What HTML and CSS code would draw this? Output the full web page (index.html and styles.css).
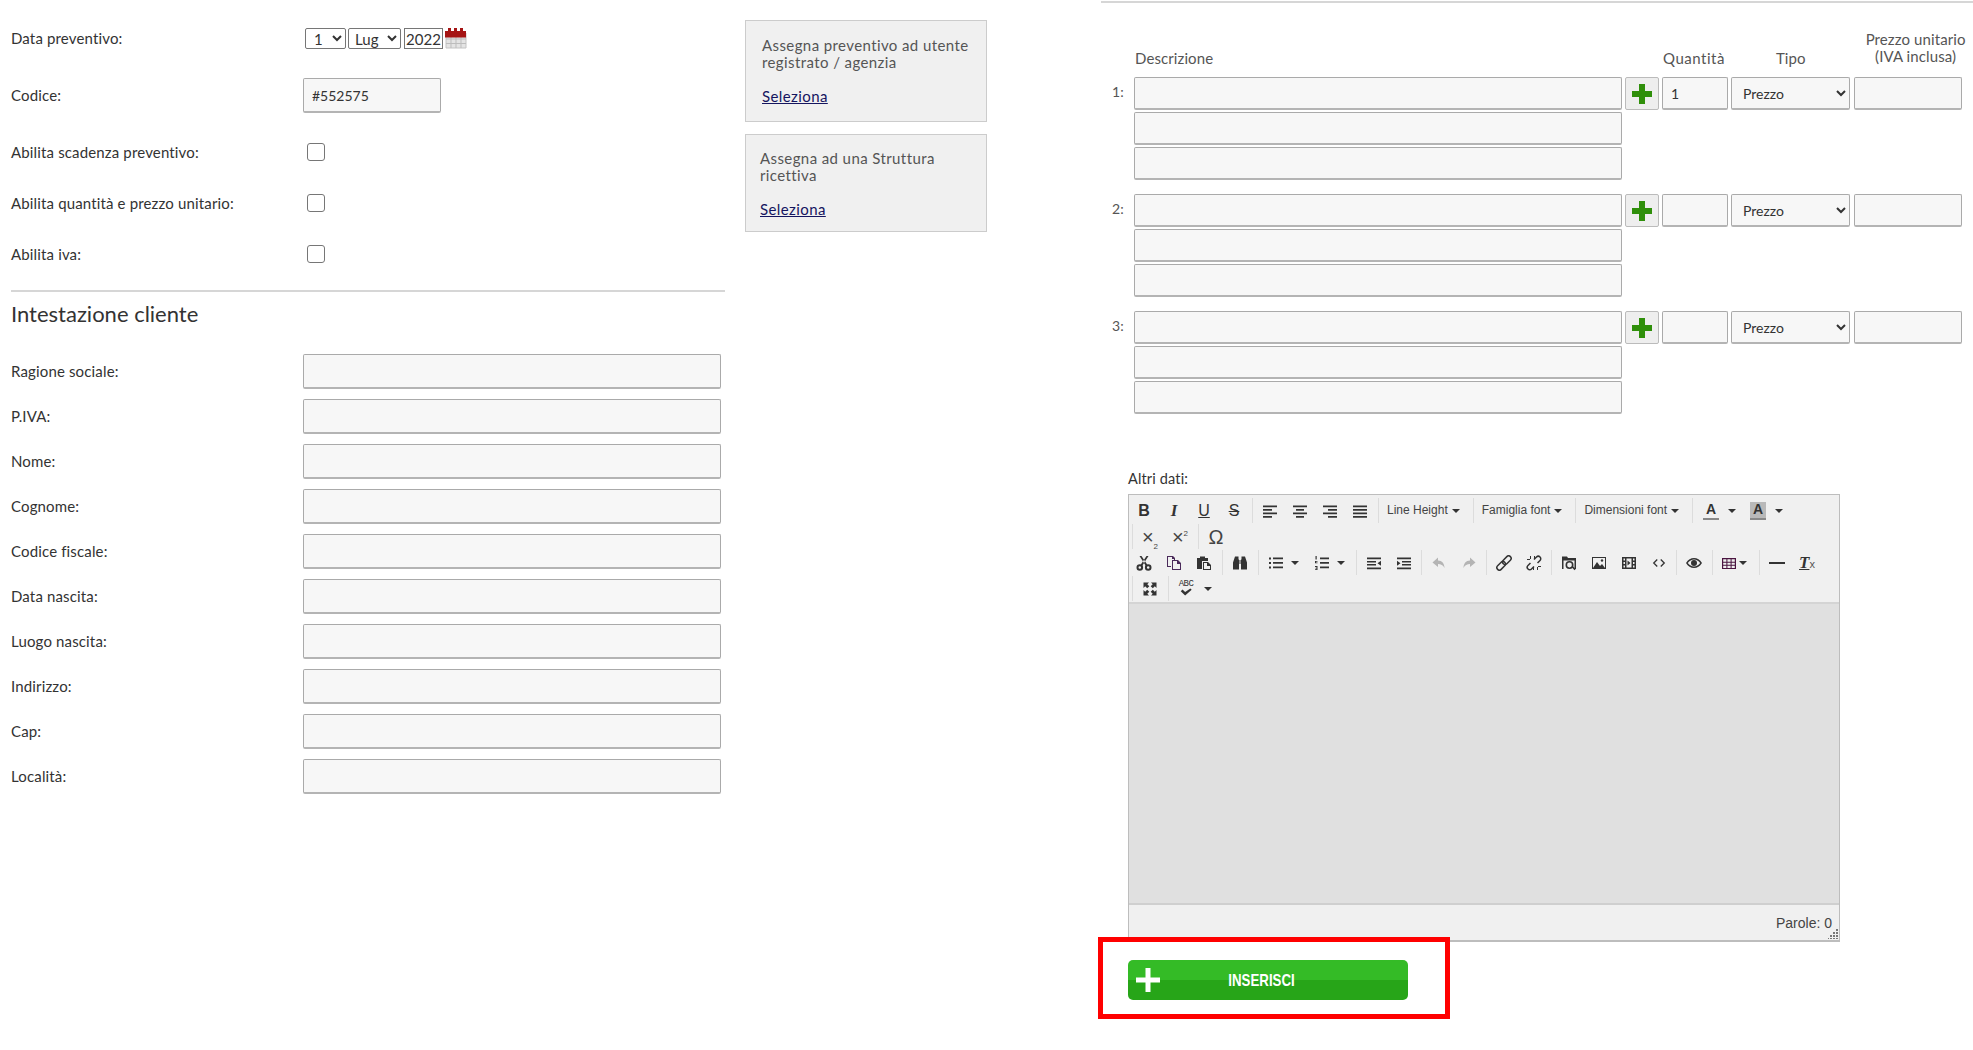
FILE: index.html
```html
<!DOCTYPE html>
<html lang="it">
<head>
<meta charset="utf-8">
<title>Preventivo</title>
<link rel="stylesheet" href="styles.css">
</head>
<body>
<svg class="sprite" aria-hidden="true">
  <symbol id="i-left" viewBox="0 0 16 16"><path d="M1 2.500h14v1.800H1zM1 6h9v1.800H1zM1 9.500h14v1.800H1zM1 13h9v1.800H1z"/></symbol>
  <symbol id="i-center" viewBox="0 0 16 16"><path d="M1 2.500h14v1.800H1zM4 6h8v1.800H4zM1 9.500h14v1.800H1zM4 13h8v1.800H4z"/></symbol>
  <symbol id="i-right" viewBox="0 0 16 16"><path d="M1 2.500h14v1.800H1zM6 6h9v1.800H6zM1 9.500h14v1.800H1zM6 13h9v1.800H6z"/></symbol>
  <symbol id="i-just" viewBox="0 0 16 16"><path d="M1 2.500h14v1.800H1zM1 6h14v1.800H1zM1 9.500h14v1.800H1zM1 13h14v1.800H1z"/></symbol>
  <symbol id="i-cut" viewBox="0 0 16 16"><path d="M3.500 1h2l6 9-1.600 1zM12.500 1h-2l-6 9 1.600 1z"/><circle cx="3.800" cy="12.500" r="2.300" fill="none" stroke="currentColor" stroke-width="2"/><circle cx="12.200" cy="12.500" r="2.300" fill="none" stroke="currentColor" stroke-width="2"/></symbol>
  <symbol id="i-copy" viewBox="0 0 16 16"><path d="M1 1h6l2 2v2H8V4H6V2H2v9h3v1H1z" fill="#4a2a5a"/><path d="M6 5h6l3 3v7H6zM7 6v8h7V9h-3V6z" fill="#4a2a5a"/></symbol>
  <symbol id="i-paste" viewBox="0 0 16 16"><path d="M1 3h3V1.500h5V3h3v3H6v8H1z"/><path d="M7 7h5l3 3v5H7z"/><path d="M8 8v6h6v-3h-3V8z" fill="#f0f0f0"/></symbol>
  <symbol id="i-bino" viewBox="0 0 16 16"><path d="M3 1.500h3.500v3H7V14.500H1V7.500zM9.500 1.500H13l2 6v7H9V4.500h.5zM7.500 5h1v4h-1z"/></symbol>
  <symbol id="i-ul" viewBox="0 0 16 16"><path d="M1 2.500h2v2H1zM1 7h2v2H1zM1 11.500h2v2H1zM5 2.500h10v1.800H5zM5 7h10v1.800H5zM5 11.500h10v1.800H5z"/></symbol>
  <symbol id="i-ol" viewBox="0 0 16 16"><path d="M1.500 1h1.200v3.500H1.500zM1 6h2.500v.8H2v.6h1.500v.8H1zM1 11h2.500v4H1v-.8h1.500v-.8H1.400v-.7h1.100v-.8H1zM6 2.500h9v1.800H6zM6 7h9v1.800H6zM6 11.500h9v1.800H6z"/></symbol>
  <symbol id="i-outdent" viewBox="0 0 16 16"><path d="M1 2.500h14v1.800H1zM1 6h9v1.500H1zM1 9h9v1.500H1zM1 12.500h14v1.800H1zM15 5.800v5l-3.500-2.500z"/></symbol>
  <symbol id="i-indent" viewBox="0 0 16 16"><path d="M1 2.500h14v1.800H1zM6 6h9v1.500H6zM6 9h9v1.500H6zM1 12.500h14v1.800H1zM1 5.800v5l3.500-2.500z"/></symbol>
  <symbol id="i-undo" viewBox="0 0 16 16"><path d="M7 2.500L1.500 7.500 7 12V9c3 0 5 1 6.500 4 0-4.500-2.500-7.500-6.500-7.500z"/></symbol>
  <symbol id="i-redo" viewBox="0 0 16 16"><path d="M9 2.500l5.500 5L9 12V9c-3 0-5 1-6.500 4C2.500 8.500 5 5.500 9 5.500z"/></symbol>
  <symbol id="i-link" viewBox="0 0 16 16"><g transform="rotate(-45 8 8)" fill="none" stroke="currentColor" stroke-width="1.500"><rect x="-1" y="5.500" width="10" height="5" rx="2.500"/><rect x="7" y="5.500" width="10" height="5" rx="2.500"/></g></symbol>
  <symbol id="i-unlink" viewBox="0 0 16 16"><g transform="rotate(-45 8 8)" fill="none" stroke="currentColor" stroke-width="1.500"><path d="M5.500 5.500H2a2.500 2.500 0 0 0 0 5h3.500"/><path d="M10.500 5.500H14a2.500 2.500 0 0 1 0 5h-3.500"/></g><path d="M4 1h1v3H4zM1 4h3v1H1zM11 12h1v3h-1zM12 11h3v1h-3zM8 1h1v3H8zM7 12h1v3H7z"/></symbol>
  <symbol id="i-browse" viewBox="0 0 16 16"><path d="M1 1.500h5l1 1.500h8v11h-1.500V5.500h-11V14H1z"/><circle cx="8.500" cy="10" r="3.200" fill="none" stroke="currentColor" stroke-width="1.600"/><path d="M10.500 12l1.200-1 3 3-1.200 1.200z"/></symbol>
  <symbol id="i-image" viewBox="0 0 16 16"><path d="M1 2h14v12H1zM2 3v10h12V3z"/><path d="M2 13l4-6 3 4 2-2 3 4z"/><circle cx="11" cy="5.500" r="1.200"/></symbol>
  <symbol id="i-media" viewBox="0 0 16 16"><path d="M1 2h14v12H1zM2.500 3.500v2H4v-2zM2.500 7v2H4V7zM2.500 10.500v2H4v-2zM12 3.500v2h1.500v-2zM12 7v2h1.500V7zM12 10.500v2h1.500v-2zM5.500 3.500v9h5v-9z" fill-rule="evenodd"/><path d="M6.500 5.500l3 2.500-3 2.500z"/></symbol>
  <symbol id="i-code" viewBox="0 0 16 16"><path d="M6 4L2 8l4 4M10 4l4 4-4 4" fill="none" stroke="currentColor" stroke-width="1.500"/></symbol>
  <symbol id="i-eye" viewBox="0 0 16 16"><path d="M0 8c2-3.500 4.800-5 8-5s6 1.500 8 5c-2 3.500-4.800 5-8 5s-6-1.500-8-5zm1.800 0c1.700 2.300 3.800 3.500 6.200 3.500S12.500 10.300 14.200 8C12.500 5.700 10.400 4.500 8 4.500S3.500 5.700 1.800 8z" fill-rule="evenodd"/><circle cx="8" cy="8" r="3"/></symbol>
  <symbol id="i-table" viewBox="0 0 16 16"><path d="M1 3h14v11H1zM2.200 4.300v2.500h3.200V4.300zM6.400 4.300v2.500h3.200V4.300zM10.600 4.300v2.500h3.200V4.300zM2.200 7.800v2h3.200v-2zM6.400 7.800v2h3.200v-2zM10.600 7.800v2h3.200v-2zM2.200 10.800V13h3.200v-2.200zM6.400 10.800V13h3.200v-2.200zM10.600 10.800V13h3.200v-2.200z" fill-rule="evenodd"/></symbol>
  <symbol id="i-hr" viewBox="0 0 16 16"><path d="M0 7h16v2H0z"/></symbol>
  <symbol id="i-full" viewBox="0 0 16 16"><path d="M1.500 1.500h5.500L5.300 3.200 7.300 5.200 5.200 7.300 3.200 5.300 1.500 7zM14.500 1.500V7l-1.700-1.700-2 2-2.100-2.100 2-2L9 1.500zM1.500 14.500V9l1.700 1.700 2-2 2.100 2.100-2 2L7 14.500zM14.500 14.500H9l1.700-1.700-2-2 2.100-2.100 2 2L14.500 9z"/></symbol>
  <symbol id="i-check" viewBox="0 0 16 8"><path d="M2 3l2-2 3 3 6-4 1.500 1.500L7 8z"/></symbol>
  <symbol id="i-plus" viewBox="0 0 20 20"><path d="M7 0h6v7h7v6h-7v7H7v-7H0V7h7z"/></symbol>
  <symbol id="i-plus-thin" viewBox="0 0 24 24"><path d="M9.500 0h5v9.500H24v5h-9.500V24h-5v-9.500H0v-5h9.500z"/></symbol>
</svg>

<div class="page">
  <section class="left">
    <form class="form">
      <div class="row row-date">
        <span class="label">Data preventivo:</span>
        <div class="date">
          <select class="sel-day"><option>1</option></select>
          <select class="sel-month"><option>Lug</option></select>
          <input class="in-year" type="text" value="2022">
          <svg class="calendar" viewBox="0 0 22 21">
            <path d="M1 5h20v15H1z" fill="#e4e4e4" stroke="#c4c4c4"/>
            <path d="M1 11h20M1 15.500h20M6 9v11M11 9v11M16 9v11" stroke="#bdbdbd" fill="none"/>
            <path d="M0 3h3V0h3v3h3V0h3v3h3V0h3v3h3v6.500H0z" fill="#a51414"/>
          </svg>
        </div>
      </div>
      <div class="row row-code">
        <span class="label">Codice:</span>
        <input class="field field-code" type="text" value="#552575">
      </div>
      <div class="row row-check first-check">
        <span class="label">Abilita scadenza preventivo:</span>
        <span class="check"></span>
      </div>
      <div class="row row-check">
        <span class="label">Abilita quantità e prezzo unitario:</span>
        <span class="check"></span>
      </div>
      <div class="row row-check">
        <span class="label">Abilita iva:</span>
        <span class="check"></span>
      </div>
      <hr class="rule">
      <h2 class="title">Intestazione cliente</h2>
      <div class="row row-field"><span class="label">Ragione sociale:</span><input class="field" type="text"></div>
      <div class="row row-field"><span class="label">P.IVA:</span><input class="field" type="text"></div>
      <div class="row row-field"><span class="label">Nome:</span><input class="field" type="text"></div>
      <div class="row row-field"><span class="label">Cognome:</span><input class="field" type="text"></div>
      <div class="row row-field"><span class="label">Codice fiscale:</span><input class="field" type="text"></div>
      <div class="row row-field"><span class="label">Data nascita:</span><input class="field" type="text"></div>
      <div class="row row-field"><span class="label">Luogo nascita:</span><input class="field" type="text"></div>
      <div class="row row-field"><span class="label">Indirizzo:</span><input class="field" type="text"></div>
      <div class="row row-field"><span class="label">Cap:</span><input class="field" type="text"></div>
      <div class="row row-field"><span class="label">Località:</span><input class="field" type="text"></div>
    </form>
    <aside class="cards">
      <div class="card card-a">
        <p>Assegna preventivo ad utente registrato / agenzia</p>
        <a href="#">Seleziona</a>
      </div>
      <div class="card card-b">
        <p>Assegna ad una Struttura ricettiva</p>
        <a href="#">Seleziona</a>
      </div>
    </aside>
  </section>

  <section class="right">
    <hr class="rule rule-top">
    <div class="items">
      <div class="item-head">
        <span class="h-desc">Descrizione</span>
        <span class="h-qty">Quantità</span>
        <span class="h-type">Tipo</span>
        <span class="h-price">Prezzo unitario<br>(IVA inclusa)</span>
      </div>
      <div class="item">
        <span class="num">1:</span>
        <div class="stack"><input class="field" type="text"><input class="field" type="text"><input class="field" type="text"></div>
        <button class="add" type="button"><svg class="green-plus"><use href="#i-plus"/></svg></button>
        <input class="field qty" type="text" value="1">
        <select class="type"><option>Prezzo</option></select>
        <input class="field price" type="text">
      </div>
      <div class="item">
        <span class="num">2:</span>
        <div class="stack"><input class="field" type="text"><input class="field" type="text"><input class="field" type="text"></div>
        <button class="add" type="button"><svg class="green-plus"><use href="#i-plus"/></svg></button>
        <input class="field qty" type="text">
        <select class="type"><option>Prezzo</option></select>
        <input class="field price" type="text">
      </div>
      <div class="item">
        <span class="num">3:</span>
        <div class="stack"><input class="field" type="text"><input class="field" type="text"><input class="field" type="text"></div>
        <button class="add" type="button"><svg class="green-plus"><use href="#i-plus"/></svg></button>
        <input class="field qty" type="text">
        <select class="type"><option>Prezzo</option></select>
        <input class="field price" type="text">
      </div>
    </div>

    <div class="bottom">
      <div class="other-label">Altri dati:</div>
      <div class="editor">
        <div class="toolbar">
          <div class="tb-row">
            <div class="grp grp-first">
              <span class="tb"><b class="g-b">B</b></span>
              <span class="tb"><i class="g-i">I</i></span>
              <span class="tb"><u class="g-u">U</u></span>
              <span class="tb"><s class="g-s">S</s></span>
            </div>
            <div class="grp">
              <span class="tb"><svg class="ic"><use href="#i-left"/></svg></span>
              <span class="tb"><svg class="ic"><use href="#i-center"/></svg></span>
              <span class="tb"><svg class="ic"><use href="#i-right"/></svg></span>
              <span class="tb"><svg class="ic"><use href="#i-just"/></svg></span>
            </div>
            <div class="grp grp-tight"><span class="menu">Line Height<i class="caret"></i></span></div>
            <div class="grp grp-tight"><span class="menu">Famiglia font<i class="caret"></i></span></div>
            <div class="grp grp-tight"><span class="menu">Dimensioni font<i class="caret"></i></span></div>
            <div class="grp">
              <span class="tb split split-a"><span class="g-a">A</span><i class="caret caret-split"></i></span>
              <span class="tb split split-a"><span class="g-a g-a-hi">A</span><i class="caret caret-split"></i></span>
            </div>
          </div>
          <div class="tb-row">
            <div class="grp">
              <span class="tb"><span class="g-x">×<sub>2</sub></span></span>
              <span class="tb"><span class="g-x">×<sup>2</sup></span></span>
            </div>
            <div class="grp"><span class="tb"><span class="g-om">Ω</span></span></div>
          </div>
          <div class="tb-row">
            <div class="grp grp-first">
              <span class="tb"><svg class="ic"><use href="#i-cut"/></svg></span>
              <span class="tb"><svg class="ic"><use href="#i-copy"/></svg></span>
              <span class="tb"><svg class="ic"><use href="#i-paste"/></svg></span>
            </div>
            <div class="grp"><span class="tb"><svg class="ic"><use href="#i-bino"/></svg></span></div>
            <div class="grp">
              <span class="tb split"><svg class="ic"><use href="#i-ul"/></svg><i class="caret caret-split"></i></span>
              <span class="tb split"><svg class="ic"><use href="#i-ol"/></svg><i class="caret caret-split"></i></span>
            </div>
            <div class="grp">
              <span class="tb"><svg class="ic"><use href="#i-outdent"/></svg></span>
              <span class="tb"><svg class="ic"><use href="#i-indent"/></svg></span>
            </div>
            <div class="grp grp-near">
              <span class="tb off"><svg class="ic"><use href="#i-undo"/></svg></span>
              <span class="tb off"><svg class="ic"><use href="#i-redo"/></svg></span>
            </div>
            <div class="grp grp-near">
              <span class="tb"><svg class="ic"><use href="#i-link"/></svg></span>
              <span class="tb"><svg class="ic"><use href="#i-unlink"/></svg></span>
            </div>
            <div class="grp grp-near">
              <span class="tb"><svg class="ic"><use href="#i-browse"/></svg></span>
              <span class="tb"><svg class="ic"><use href="#i-image"/></svg></span>
              <span class="tb"><svg class="ic"><use href="#i-media"/></svg></span>
              <span class="tb"><svg class="ic ic-sm"><use href="#i-code"/></svg></span>
            </div>
            <div class="grp grp-near"><span class="tb"><svg class="ic"><use href="#i-eye"/></svg></span></div>
            <div class="grp"><span class="tb tb-table"><svg class="ic ic-table"><use href="#i-table"/></svg><i class="caret caret-split"></i></span></div>
            <div class="grp">
              <span class="tb"><svg class="ic"><use href="#i-hr"/></svg></span>
              <span class="tb"><span class="g-clear"><em>T</em><small>x</small></span></span>
            </div>
          </div>
          <div class="tb-row">
            <div class="grp"><span class="tb"><svg class="ic"><use href="#i-full"/></svg></span></div>
            <div class="grp">
              <span class="tb split split-abc"><span class="g-abc">ABC<svg class="ic-check"><use href="#i-check"/></svg></span><i class="caret caret-split"></i></span>
            </div>
          </div>
        </div>
        <div class="content"></div>
        <div class="status">
          <span>Parole: 0</span>
          <svg class="grip" viewBox="0 0 10 10"><path d="M8 0h2v2H8zM8 3h2v2H8zM5 3h2v2H5zM8 6h2v2H8zM5 6h2v2H5zM2 6h2v2H2zM8 9h2v1H8zM5 9h2v1H5zM2 9h2v1H2zM0 9h1v1H0z"/></svg>
        </div>
      </div>
      <div class="submit">
        <button class="insert" type="button">
          <svg class="insert-plus"><use href="#i-plus-thin"/></svg>
          <span class="insert-text"><span class="insert-label">INSERISCI</span></span>
        </button>
        <div class="annotation"></div>
      </div>
    </div>
  </section>
</div>
</body>
</html>
```
FILE: styles.css
```css
* { box-sizing: border-box; }
html, body { margin: 0; padding: 0; background: #fff; }
body {
  font-family: "Lato", "Open Sans", "Liberation Sans", sans-serif;
  font-size: 15px;
  letter-spacing: .15px;
  color: #333;
  height: 1050px;
  overflow: hidden;
}
.sprite { display: none; }
.page { display: flex; align-items: flex-start; }

/* left column */
.left { display: flex; align-items: flex-start; width: 1101px; padding-left: 11px; flex: none; }
.form { width: 714px; flex: none; padding-top: 28px; }
.row { display: flex; align-items: center; }
.label { width: 292px; flex: none; padding-bottom: 2px; }
.row-check .label { padding-bottom: 0; }
.row-date { height: 21px; }
.row-code { height: 35px; margin-top: 29px; }
.row-check { height: 18px; margin-top: 33px; }
.first-check { margin-top: 30px; }
.row-field { height: 35px; margin-bottom: 10px; }
.date { display: flex; align-items: center; gap: 2px; margin-left: 2px; }
.date select, .in-year {
  height: 21px; font: 15px "Lato", sans-serif; color: #333;
  border: 1px solid #767676; border-radius: 2px; background: #fff; padding: 0;
}
.sel-day { width: 41px; padding-left: 4px !important; }
.sel-month { width: 53px; padding-left: 2px !important; }
.in-year { width: 39px; margin-left: 1px; text-align: center; border-radius: 0; }
.calendar { width: 22px; height: 21px; }

.field {
  display: block;
  width: 418px; height: 35px;
  background: #f7f7f7;
  border: 1px solid #aaa;
  border-bottom: 2px solid #b4b4b4;
  border-radius: 2px;
  padding: 0 8px;
  font: 14px "Lato", sans-serif;
  color: #333;
}
.field-code { width: 138px; }
.check {
  display: block; width: 18px; height: 18px; margin-left: 4px;
  background: #fff; border: 1px solid #767676; border-radius: 3px;
}
.rule { border: 0; border-top: 2px solid #d6d6d6; margin: 0; }
.left .rule { margin-top: 27px; }
.title { font-size: 22px; line-height: 26px; font-weight: 400; margin: 9px 0 27px; color: #333; letter-spacing: 0; }

.cards { width: 242px; margin-left: 20px; padding-top: 20px; flex: none; }
.card {
  background: #f0f0f0;
  border: 1px solid #ccc;
  color: #555;
  font-size: 15px;
  letter-spacing: .4px;
  line-height: 17px;
}
.card p { margin: 0 0 17px; }
.card a { color: #15155f; text-decoration: underline; }
.card-a { height: 102px; padding: 16px 10px 0 16px; }
.card-b { height: 98px; margin-top: 12px; padding: 15px 30px 0 14px; }

/* right column */
.right { flex: 1; min-width: 0; }
.rule-top { margin-top: 1px; }
.items { padding-top: 29px; }
.item-head { display: flex; align-items: flex-end; height: 34px; margin-bottom: 11px; color: #555; font-size: 15px; letter-spacing: .1px; line-height: 17px; }
.h-desc { width: 552px; margin-left: 34px; transform: translateY(1px); }
.h-qty { width: 118px; letter-spacing: .5px; transform: translateY(1px); }
.h-type { width: 86px; transform: translateY(1px); }
.h-price { width: 120px; text-align: center; transform: translateY(-1px); white-space: nowrap; }
.item { display: flex; align-items: flex-start; margin-bottom: 14px; }
.num { width: 33px; padding-left: 11px; line-height: 30px; color: #555; font-size: 14px; }
.stack { width: 488px; display: flex; flex-direction: column; gap: 2px; }
.stack .field { width: 488px; height: 33px; }
.add {
  width: 34px; height: 33px; margin-left: 3px; padding: 0;
  display: flex; align-items: center; justify-content: center;
  background: #eee; border: 1px solid #bbb; border-radius: 2px;
}
.green-plus { width: 20px; height: 20px; fill: #2f8f0a; }
.qty { width: 66px; height: 33px; margin-left: 3px; font-size: 14px; }
.type {
  width: 119px; height: 33px; margin-left: 3px; padding-left: 7px;
  background: #f7f7f7; border: 1px solid #aaa; border-bottom: 2px solid #b4b4b4; border-radius: 2px;
  font: 14px "Lato", sans-serif; color: #333;
}
.price { width: 108px; height: 33px; margin-left: 4px; }

.bottom { margin-left: 27px; width: 712px; padding-top: 42px; }
.other-label { line-height: 17px; font-size: 14.500px; margin-bottom: 7px; color: #333; }

.editor { border: 1px solid #bdbdbd; border-bottom-width: 2px; background: #f0f0f0; letter-spacing: 0; }
.toolbar { height: 109px; padding-top: 3px; border-bottom: 2px solid #d4d4d4; font-family: "Liberation Sans", sans-serif; color: #333; }
.tb-row { display: flex; height: 26px; }
.grp { display: flex; height: 25px; margin-left: 3px; padding-left: 2px; border-left: 1px solid #dcdcdc; }
.grp-first { margin-left: 0; padding-left: 0; border-left: 0; }
.grp-near { margin-left: 2px; }
.grp-tight { padding-left: 0; }
.tb { width: 30px; height: 25px; display: flex; align-items: center; justify-content: center; flex: none; }
.tb.split { width: 46px; justify-content: flex-start; padding-left: 7px; gap: 7px; }
.tb.split-a { width: 47px; padding-left: 8px; gap: 9px; }
.tb.split-abc { padding-left: 5px; gap: 8px; }
.tb-table { width: 41px; justify-content: flex-start; padding-left: 6px; gap: 2px; }
.off { color: #b4b4b4; }
.ic { width: 16px; height: 16px; fill: currentColor; flex: none; }
.ic-sm { width: 14px; height: 14px; }
.ic-table { fill: #4a1440; }
.menu { font-size: 12px; line-height: 25px; padding: 0 10px 0 8px; white-space: nowrap; color: #444; }
.caret { display: inline-block; width: 0; height: 0; margin-left: 4px; vertical-align: middle; border: 4px solid transparent; border-bottom: 0; border-top-color: #333; }
.caret-split { margin-left: 0; flex: none; }
.g-b, .g-i, .g-u, .g-s { font-size: 16px; line-height: 1; }
.g-i { font-family: "Liberation Serif", serif; font-weight: 700; font-size: 17px; }
.g-a { display: block; width: 16px; height: 18px; font-size: 14px; font-weight: 700; line-height: 15px; text-align: center; border-bottom: 2px solid #888; }
.g-a-hi { background: #b9b9b9; }
.g-x { font-size: 20px; line-height: 1; color: #444; }
.g-x sub, .g-x sup { font-size: 8px; line-height: 0; }
.g-om { font-size: 20px; line-height: 1; color: #444; }
.g-clear { font-size: 17px; line-height: 1; }
.g-clear em { font-family: "Liberation Serif", serif; font-weight: 700; text-decoration: underline; }
.g-clear small { font-size: 11px; color: #555; }
.g-abc { position: relative; width: 20px; height: 18px; font-size: 9px; line-height: 9px; text-align: center; font-family: "Liberation Mono", monospace; letter-spacing: -.6px; }
.ic-check { position: absolute; left: 3px; top: 8px; width: 14px; height: 8px; fill: #333; }
.content { height: 299px; background: #e0e0e0; }
.status {
  position: relative; height: 37px; border-top: 2px solid #cfcfcf;
  display: flex; align-items: center; justify-content: flex-end; padding-right: 7px;
  font: 14px/1 "Liberation Sans", sans-serif; color: #444;
}
.grip { position: absolute; right: 1px; bottom: 1px; width: 10px; height: 10px; fill: #777; }

.submit { position: relative; margin-top: 18px; width: 280px; }
.insert {
  display: flex; align-items: center; width: 280px; height: 40px; padding: 0 0 0 8px;
  border: 0; border-radius: 5px;
  background: linear-gradient(#34bb26 0 50%, #27a518 50% 100%);
  color: #fff;
}
.insert-plus { width: 24px; height: 24px; fill: #fff; flex: none; }
.insert-text {
  flex: 1; padding: 1px 44px 0 0; text-align: center;
  font: 700 17px "Liberation Sans", sans-serif;
}
.insert-label { display: inline-block; transform: scaleX(.78); }
.annotation {
  position: absolute; left: -30px; top: -23px; width: 352px; height: 82px;
  border: 5px solid #f00;
}
```
